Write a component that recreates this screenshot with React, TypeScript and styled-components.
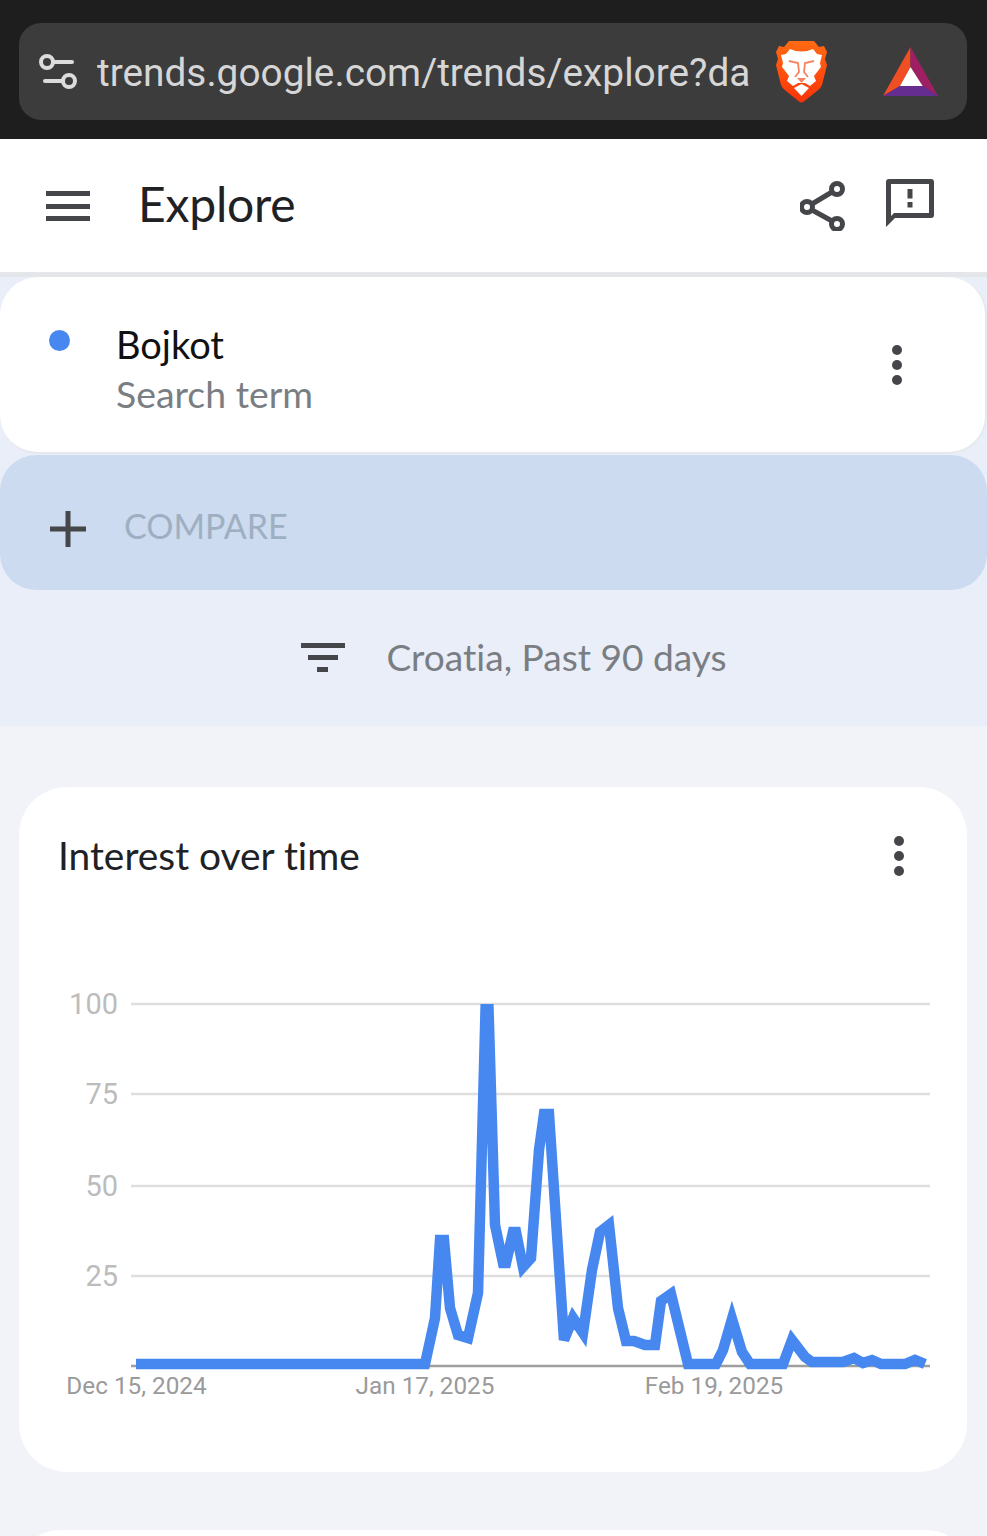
import React, { FC } from 'react';
import styled, { createGlobalStyle } from 'styled-components';

const colors = {
  chrome: '#1e1e1e',
  pill: '#3c3c3c',
  url: '#d6d6d6',
  icon: '#444649',
  ink: '#202124',
  muted: '#7a7e83',
  panel: '#e9eef9',
  page: '#f1f3f9',
  compare: '#ccdbef',
  compareText: '#9fafc2',
  blue: '#4688f0',
  grid: '#dedede',
  axis: '#9e9e9e',
  label: '#9a9a9a',
  labelLight: '#bcbcbc',
};

const sans = `Lato, 'Noto Sans', sans-serif`;

const GlobalStyle = createGlobalStyle`
  html, body {
    margin: 0;
    padding: 0;
    background: ${colors.page};
  }
`;

const Page = styled.div`
  width: 987px;
  height: 1536px;
  overflow: hidden;
  background: ${colors.page};
  font-family: ${sans};
`;

const BrowserBar = styled.div`
  box-sizing: border-box;
  height: 139px;
  padding: 23px 20px 19px 19px;
  background: ${colors.chrome};
`;

const UrlPill = styled.div`
  display: flex;
  align-items: center;
  height: 97px;
  padding-left: 20px;
  border-radius: 22px;
  background: ${colors.pill};
`;

const UrlText = styled.div`
  width: 657px;
  margin-left: 20px;
  padding-top: 2px;
  font: 400 38.8px 'Roboto', sans-serif;
  color: ${colors.url};
  white-space: nowrap;
  overflow: hidden;
`;

const BraveIcon = styled.svg`
  width: 51px;
  height: 62px;
  margin-left: 22px;
`;

const BatIcon = styled.svg`
  width: 55px;
  height: 49px;
  margin-left: 56px;
`;

const Header = styled.header`
  box-sizing: border-box;
  display: flex;
  align-items: center;
  height: 138px;
  padding: 0 52px 4px 46px;
  background: #fff;
  border-bottom: 5px solid #e4e6e9;
`;

const Hamburger = styled.div`
  display: flex;
  flex-direction: column;
  gap: 7.5px;
  width: 44px;
  margin-top: 5px;
`;

const HamburgerBar = styled.span`
  height: 5px;
  background: ${colors.icon};
`;

const Title = styled.h1`
  flex: 1;
  margin: 0 0 0 48px;
  font: 400 48px ${sans};
  letter-spacing: -0.2px;
  color: ${colors.ink};
`;

const HeaderIcon = styled.svg<{ $gap?: number; $top: number }>`
  margin-left: ${(props) => props.$gap ?? 0}px;
  margin-top: ${(props) => props.$top}px;
`;

const TopPanel = styled.section`
  height: 449px;
  background: ${colors.panel};
`;

const TermCard = styled.div`
  box-sizing: border-box;
  display: flex;
  align-items: flex-start;
  height: 177px;
  padding: 44px 0 0 49px;
  background: #fff;
  border: 2px solid #e6e8ec;
  border-width: 0 2px 2px 0;
  border-radius: 38px;
`;

const TermDot = styled.span`
  flex: none;
  width: 21px;
  height: 21px;
  margin-top: 9px;
  border-radius: 50%;
  background: ${colors.blue};
`;

const TermText = styled.div`
  flex: 1;
  margin-left: 46px;
`;

const TermName = styled.div`
  font: 400 38px/48px ${sans};
  margin-top: -1px;
  color: #111;
`;

const TermKind = styled.div`
  margin-top: 4px;
  font: 400 37.4px/44px ${sans};
  color: ${colors.muted};
`;

const Kebab = styled.div<{ $right: number; $top: number }>`
  display: flex;
  flex-direction: column;
  gap: 5px;
  flex: none;
  margin-right: ${(props) => props.$right}px;
  margin-top: ${(props) => props.$top}px;
`;

const KebabDot = styled.span`
  width: 10px;
  height: 10px;
  border-radius: 50%;
  background: ${colors.icon};
`;

const CompareBar = styled.div`
  box-sizing: border-box;
  display: flex;
  align-items: center;
  height: 135px;
  margin-top: 1px;
  padding: 13px 0 0 50px;
  border-radius: 36px;
  background: ${colors.compare};
`;

const CompareLabel = styled.span`
  margin: 0 0 7px 38px;
  font: 400 34px ${sans};
  color: ${colors.compareText};
`;

const FilterRow = styled.div`
  box-sizing: border-box;
  display: flex;
  align-items: center;
  justify-content: center;
  height: 136px;
  padding-left: 41px;
`;

const FilterIcon = styled.svg`
  margin-top: 2px;
`;

const FilterText = styled.span`
  margin: 0 0 3px 41px;
  font: 400 37.1px ${sans};
  font-variant-ligatures: none;
  color: ${colors.muted};
`;

const ChartCard = styled.section`
  height: 685px;
  margin: 61px 20px 0 19px;
  background: #fff;
  border-radius: 48px;
`;

const ChartHeader = styled.div`
  box-sizing: border-box;
  display: flex;
  align-items: center;
  justify-content: space-between;
  height: 140px;
  padding: 0 63px 2px 39px;
`;

const ChartTitle = styled.h2`
  margin: 0 0 2px;
  font: 400 38.9px ${sans};
  font-variant-ligatures: none;
  color: ${colors.ink};
`;

const ChartSvg = styled.svg`
  display: block;
  margin-top: 53px;
`;

const NextCard = styled.div`
  height: 40px;
  margin: 58px 20px 0 19px;
  background: #fff;
  border-radius: 48px 48px 0 0;
`;

const gridLines = [
  { label: '100', y: 1004 },
  { label: '75', y: 1094 },
  { label: '50', y: 1186 },
  { label: '25', y: 1276 },
];

const dates = [
  { label: 'Dec 15, 2024', x: 136.5 },
  { label: 'Jan 17, 2025', x: 425 },
  { label: 'Feb 19, 2025', x: 714 },
];

// traced from the reference, in page coordinates
const series =
  '136,1364 425,1364 435,1318 440,1240 444,1240 450,1308 458,1335 468,1338 478,1293 ' +
  '486,992 488,992 495,1225 503,1263 506,1263 513,1232 516,1232 523,1267 ' +
  '531,1258 539,1150 544,1114 549,1114 564,1340 573,1318 583,1333 592,1270 ' +
  '600,1232 609,1225 618,1308 626,1341 634,1341 645,1345 655,1345 661,1301 ' +
  '671,1294 688,1364 716,1364 723,1350 732,1319 742,1352 750,1364 783,1364 ' +
  '792,1340 805,1357 812,1362 843,1362 854,1358 863,1363 872,1360 881,1364 ' +
  '905,1364 915,1360 925,1364';

const InterestChart: FC = () => (
  <ChartSvg width="948" height="425" viewBox="19 980 948 425">
    <defs>
      <clipPath id="plot">
        <rect x="120" y="1004" width="820" height="366" />
      </clipPath>
    </defs>
    {gridLines.map((line) => (
      <g key={line.label}>
        <line x1="131" x2="930" y1={line.y} y2={line.y} stroke={colors.grid} strokeWidth="2.4" />
        <text
          x="118"
          y={line.y + 10}
          textAnchor="end"
          fontFamily="Roboto, sans-serif"
          fontSize="29"
          fill={colors.labelLight}
        >
          {line.label}
        </text>
      </g>
    ))}
    <line x1="131" x2="930" y1="1366" y2="1366" stroke={colors.axis} strokeWidth="2.4" />
    <polyline
      points={series}
      fill="none"
      stroke={colors.blue}
      strokeWidth="10.5"
      strokeLinejoin="miter"
      strokeMiterlimit="4"
      clipPath="url(#plot)"
    />
    {dates.map((date) => (
      <text
        key={date.label}
        x={date.x}
        y="1394"
        textAnchor="middle"
        fontFamily="Roboto, sans-serif"
        fontSize="24.3"
        fill={colors.label}
      >
        {date.label}
      </text>
    ))}
  </ChartSvg>
);

const KebabMenu: FC<{ right: number; top: number }> = ({ right, top }) => (
  <Kebab $right={right} $top={top}>
    <KebabDot />
    <KebabDot />
    <KebabDot />
  </Kebab>
);

const App: FC = () => (
  <Page>
    <GlobalStyle />
    <BrowserBar>
      <UrlPill>
        <svg width="38" height="38" viewBox="0 0 38 38" fill="none" stroke="#dcdcdc" strokeWidth="4">
          <circle cx="8" cy="9" r="6" />
          <path d="M14 9h19" strokeLinecap="round" />
          <circle cx="30" cy="28" r="6" />
          <path d="M6 28h18" strokeLinecap="round" />
        </svg>
        <UrlText>trends.google.com/trends/explore?da</UrlText>
        <BraveIcon viewBox="0 0 51 62">
          <defs>
            <linearGradient id="brave" x1="0" y1="0" x2="0" y2="1">
              <stop offset="0" stopColor="#ff6a13" />
              <stop offset="0.6" stopColor="#ff4a0c" />
              <stop offset="1" stopColor="#f5330a" />
            </linearGradient>
          </defs>
          <path
            d="M13 0H38L43 6L48 5L51 11L49 18L51 24L46 44Q45 47 41 50L28 60.5Q25.5 62.5 23 60.5L10 50Q6 47 5 44L0 24L2 18L0 11L3 5L8 6Z"
            fill="url(#brave)"
          />
          <path
            d="M14 8Q25.5 13 37 8L41 13L46 14L44 22L45 26L38 35L40 40L34 45L29 42H22L17 45L11 40L13 35L6 26L7 22L5 14L10 13Z"
            fill="#fff"
          />
          <path d="M18 47L25.5 43L33 47L25.5 55Z" fill="#fff" />
          <path
            d="M13 20L22 22L23 31L19 36M38 20L29 22L28 31L32 36"
            fill="none"
            stroke="#f6825f"
            strokeWidth="1.8"
          />
          <path d="M21 37H30L25.5 42Z" fill="#f6825f" />
        </BraveIcon>
        <BatIcon viewBox="0 0 55 49">
          <polygon points="27.5,0 0,49 17,39 27.5,20" fill="#f04e23" />
          <polygon points="27.5,0 55,49 39.7,39 27.5,20" fill="#9e1f63" />
          <polygon points="0,49 55,49 39.7,39 17,39" fill="#662d91" />
          <polygon points="27.5,20 17,39 39.7,39" fill="#fff" />
        </BatIcon>
      </UrlPill>
    </BrowserBar>

    <Header>
      <Hamburger>
        <HamburgerBar />
        <HamburgerBar />
        <HamburgerBar />
      </Hamburger>
      <Title>Explore</Title>
      <HeaderIcon $top={4} width="46" height="50" viewBox="0 0 46 50" fill="none" stroke={colors.icon} strokeWidth="5">
        <circle cx="37" cy="8" r="5.5" />
        <circle cx="7" cy="26" r="5.5" />
        <circle cx="37" cy="43" r="5.5" />
        <path d="M12 23L32 11M12 29L32 40" />
      </HeaderIcon>
      <HeaderIcon $gap={39} $top={1} width="50" height="50" viewBox="0 0 50 50">
        <path
          fillRule="evenodd"
          d="M4 0H46a3 3 0 0 1 3 3V36a3 3 0 0 1-3 3H10L1 48V3a3 3 0 0 1 3-3ZM6 5V37L9 34H44V5Z"
          fill={colors.icon}
        />
        <rect x="22.5" y="10" width="5" height="9.5" fill={colors.icon} />
        <rect x="22.5" y="23" width="5" height="5.5" fill={colors.icon} />
      </HeaderIcon>
    </Header>

    <TopPanel>
      <TermCard>
        <TermDot />
        <TermText>
          <TermName>Bojkot</TermName>
          <TermKind>Search term</TermKind>
        </TermText>
        <KebabMenu right={83} top={24} />
      </TermCard>
      <CompareBar>
        <svg width="36" height="36" viewBox="0 0 36 36" fill={colors.icon}>
          <rect x="15.5" y="0" width="5" height="36" />
          <rect x="0" y="15.5" width="36" height="5" />
        </svg>
        <CompareLabel>COMPARE</CompareLabel>
      </CompareBar>
      <FilterRow>
        <FilterIcon width="44" height="32" viewBox="0 0 44 32" fill={colors.icon}>
          <rect x="0" y="0" width="44" height="5" />
          <rect x="7" y="12" width="30" height="5" />
          <rect x="16" y="24" width="11" height="5" />
        </FilterIcon>
        <FilterText>Croatia, Past 90 days</FilterText>
      </FilterRow>
    </TopPanel>

    <ChartCard>
      <ChartHeader>
        <ChartTitle>Interest over time</ChartTitle>
        <KebabMenu right={0} top={0} />
      </ChartHeader>
      <InterestChart />
    </ChartCard>
    <NextCard />
  </Page>
);

export default App;
